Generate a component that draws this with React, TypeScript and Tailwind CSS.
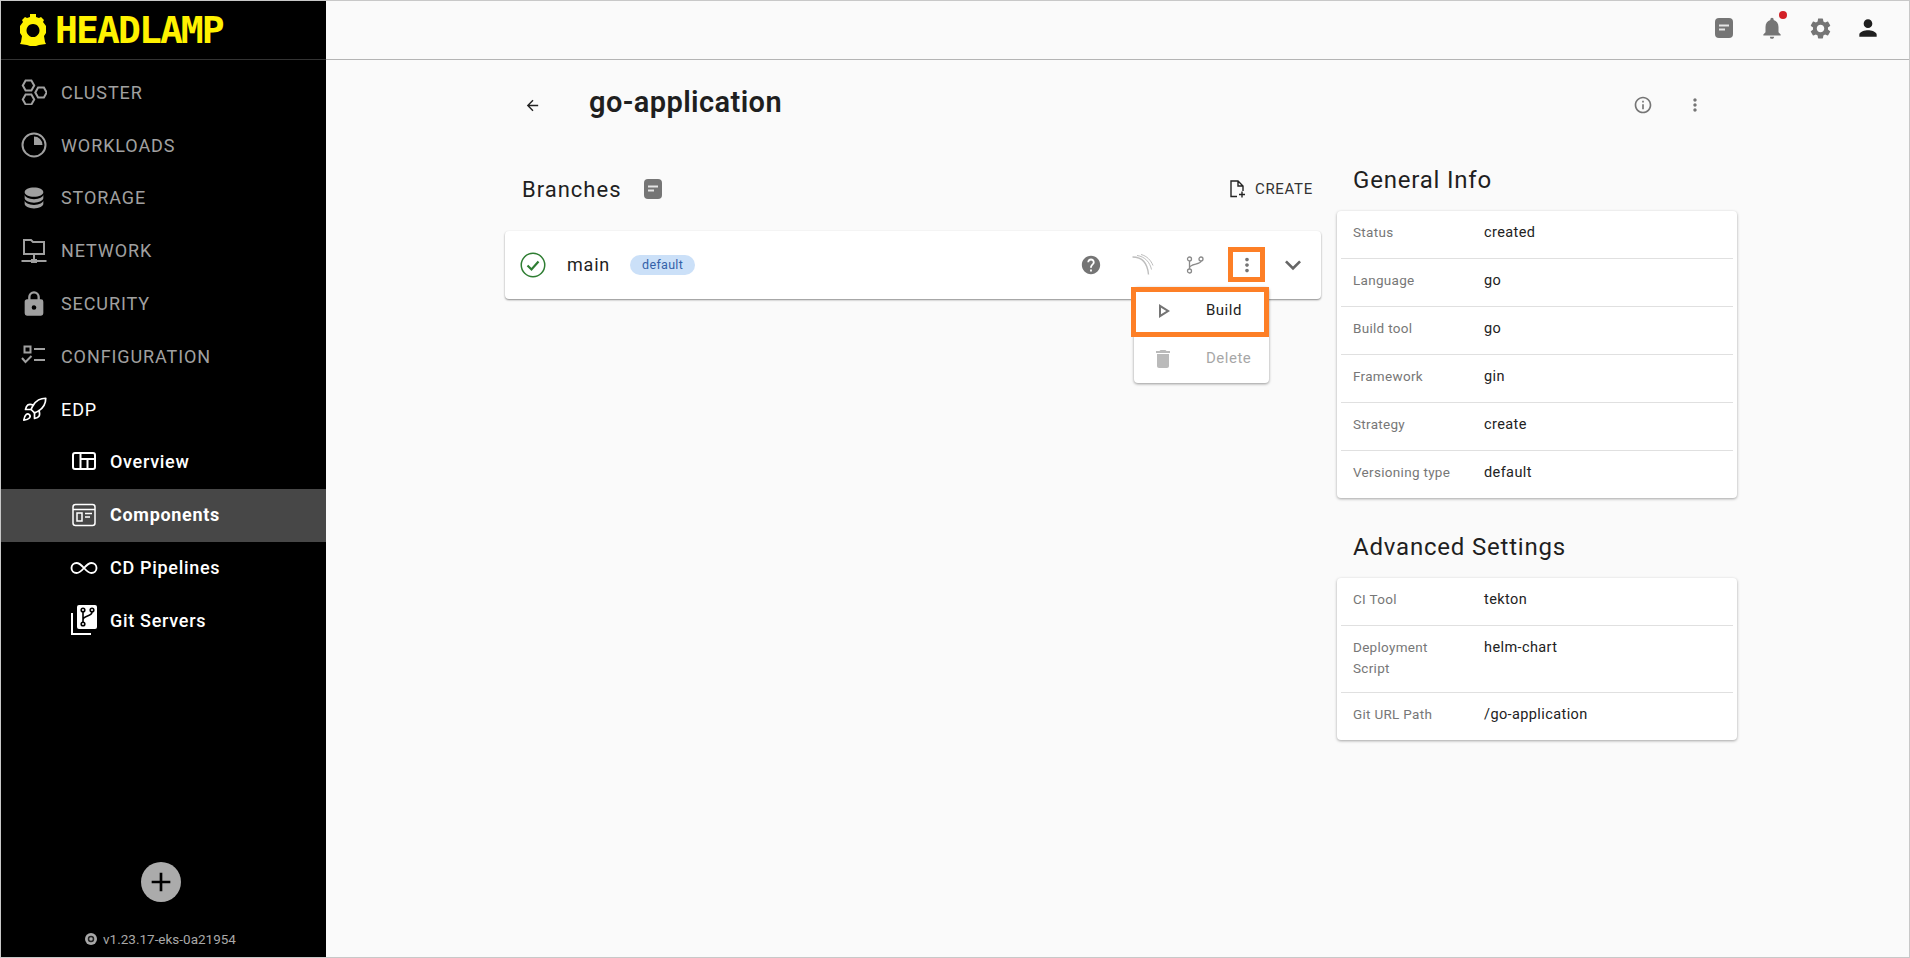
import type { ReactNode } from "react"
import { Infinity as InfinityIcon, Rocket } from "lucide-react"
import {
  MdAdd,
  MdArrowBack,
  MdDelete,
  MdExpandMore,
  MdHelp,
  MdInfoOutline,
  MdMoreVert,
  MdNotifications,
  MdOutlinePlayArrow,
  MdPerson,
  MdSettings,
} from "react-icons/md"

function NoteBadge({ className }: { className: string }) {
  return (
    <svg viewBox="0 0 18 20" className={className}>
      <rect width="18" height="20" rx="4" fill="#757575" />
      <path d="M4 7.500h10M4 11.500h6" stroke="#e4e4e4" strokeWidth="2" />
    </svg>
  )
}

function HeadlampGear() {
  return (
    <svg viewBox="0 0 26 32" className="h-[32px] w-[26px]">
      <path
        fillRule="evenodd"
        fill="#fff200"
        d="M10 0h6v3l3 1 2-1 3 3-1 2 3 4v7l-2 3 1 6 1 2-7 1-3 1h-6l-3-1-7-1 1-2 1-6-2-3v-7l3-4-1-2 3-3 2 1 3-1zM13 10a6.500 6.500 0 1 0 .01 0z"
      />
    </svg>
  )
}

function ClusterIcon() {
  const hex = "M-3.400-5.800h6.800L6.700 0 3.400 5.800h-6.800L-6.700 0z"
  return (
    <svg viewBox="0 0 26 26" className="h-[26px] w-[26px]" fill="none" stroke="currentColor" strokeWidth="2.400">
      <path d={hex} transform="translate(7.500 6.500) scale(0.85)" />
      <path d={hex} transform="translate(7.500 20.500) scale(0.85)" />
      <path d={hex} transform="translate(20 13.500) scale(0.85)" />
    </svg>
  )
}

function WorkloadsIcon() {
  return (
    <svg viewBox="0 0 26 26" className="h-[26px] w-[26px]" fill="none" stroke="currentColor">
      <circle cx="13" cy="13" r="11.500" strokeWidth="2" />
      <path d="M13 4.500a8.500 8.500 0 0 1 8.500 8.500H13z" fill="currentColor" stroke="none" />
    </svg>
  )
}

function StorageIcon() {
  return (
    <svg viewBox="0 0 24 24" className="h-[28px] w-[28px]" fill="currentColor">
      <path d="M12,3C7.58,3 4,4.79 4,7C4,9.21 7.58,11 12,11C16.42,11 20,9.21 20,7C20,4.79 16.42,3 12,3M4,9V12C4,14.21 7.58,16 12,16C16.42,16 20,14.21 20,12V9C20,11.21 16.42,13 12,13C7.58,13 4,11.21 4,9M4,14V17C4,19.21 7.58,21 12,21C16.42,21 20,19.21 20,17V14C20,16.21 16.42,18 12,18C7.58,18 4,16.21 4,14Z" />
    </svg>
  )
}

function NetworkIcon() {
  return (
    <svg viewBox="0 0 26 26" className="h-[26px] w-[26px]" fill="none" stroke="currentColor" strokeWidth="2">
      <path d="M3 16V2h7l2 2h11v12H3z" />
      <path d="M13 16v6M0.500 23h25" />
      <rect x="10" y="21" width="6" height="4" fill="currentColor" stroke="none" />
    </svg>
  )
}

function LockIcon() {
  return (
    <svg viewBox="0 0 24 24" className="h-[28px] w-[28px]" fill="currentColor">
      <path d="M12,17A2,2 0 0,0 14,15C14,13.89 13.1,13 12,13A2,2 0 0,0 10,15A2,2 0 0,0 12,17M18,8A2,2 0 0,1 20,10V20A2,2 0 0,1 18,22H6A2,2 0 0,1 4,20V10C4,8.89 4.9,8 6,8H7V6A5,5 0 0,1 12,1A5,5 0 0,1 17,6V8H18M12,3A3,3 0 0,0 9,6V8H15V6A3,3 0 0,0 12,3Z" />
    </svg>
  )
}

function ConfigIcon() {
  return (
    <svg viewBox="0 0 26 26" className="h-[26px] w-[26px]" fill="none" stroke="currentColor" strokeWidth="2">
      <rect x="3.500" y="3.500" width="6" height="6" />
      <path d="M13 6h11M13 17h11M1 15l3.500 4 6-6" />
    </svg>
  )
}

function OverviewIcon() {
  return (
    <svg viewBox="0 0 24 20" className="h-[20px] w-[24px]" fill="none" stroke="currentColor" strokeWidth="2">
      <rect x="1" y="1" width="22" height="16" rx="2" />
      <path d="M8.500 1v16M8.500 7H23M15.500 7v10" />
    </svg>
  )
}

function ComponentsIcon() {
  return (
    <svg viewBox="0 0 24 24" className="h-[24px] w-[24px]" fill="none" stroke="currentColor" strokeWidth="1.500">
      <rect x="1" y="1.500" width="22" height="21" rx="2.500" />
      <path d="M1 6.500h22M5 10h5v8H5zM13 10.500h7M13 14h5" />
    </svg>
  )
}

function GitServersIcon() {
  return (
    <svg viewBox="0 0 26 30" className="h-[30px] w-[26px]">
      <rect x="6" y="0" width="20" height="24" rx="2" fill="#fff" />
      <path d="M1 8v21h19" fill="none" stroke="#fff" strokeWidth="2" />
      <g fill="none" stroke="#000" strokeWidth="1.600">
        <circle cx="12" cy="5" r="1.800" />
        <circle cx="12" cy="19" r="1.800" />
        <circle cx="21" cy="5" r="1.800" />
        <path d="M12 7v10M21 7c0 5-9 3-9 8" />
      </g>
    </svg>
  )
}

function KubeIcon() {
  return (
    <svg viewBox="0 0 12 12" className="h-[12px] w-[12px]">
      <circle cx="6" cy="6" r="6" fill="#a8a8a8" />
      <circle cx="6" cy="6" r="2.500" fill="none" stroke="#222" strokeWidth="1.500" />
    </svg>
  )
}

function StatusIcon() {
  return (
    <svg viewBox="0 0 26 26" className="h-[26px] w-[26px]" fill="none" stroke="#2e7d32">
      <circle cx="13" cy="13" r="11.750" strokeWidth="1.500" />
      <path d="M7.500 13.500l4 4 7-8" strokeWidth="2.200" />
    </svg>
  )
}

function ArcsIcon() {
  return (
    <svg viewBox="0 0 22 22" className="h-[22px] w-[22px]" fill="none" stroke="#bdbdbd" strokeWidth="1">
      <path d="M0.500 3c9 0 15 6 16 17.500" strokeWidth="1.400" />
      <path d="M5 1.500c8 1 13 7 14.500 14" />
      <path d="M9 0.500c6 1.500 10 6 12 11" />
    </svg>
  )
}

function BranchIcon() {
  return (
    <svg viewBox="0 0 18 18" className="h-[18px] w-[18px]" fill="none" stroke="#8a8a8a" strokeWidth="1.300">
      <circle cx="3.500" cy="3" r="2" />
      <circle cx="3.500" cy="15" r="2" />
      <circle cx="15" cy="3" r="2" />
      <path d="M3.500 5v8M15 5c0 4-11.500 2-11.500 7" />
    </svg>
  )
}

function FileAddIcon() {
  return (
    <svg viewBox="0 0 16 18" className="h-[18px] w-[16px]" fill="none" stroke="#222" strokeWidth="1.400">
      <path d="M7 16.500H1V1h7l5 5v5M8 1v5h5M12 11.500v6M9 14.500h6" />
    </svg>
  )
}

const navItems: { label: string; icon: ReactNode }[] = [
  { label: "CLUSTER", icon: <ClusterIcon /> },
  { label: "WORKLOADS", icon: <WorkloadsIcon /> },
  { label: "STORAGE", icon: <StorageIcon /> },
  { label: "NETWORK", icon: <NetworkIcon /> },
  { label: "SECURITY", icon: <LockIcon /> },
  { label: "CONFIGURATION", icon: <ConfigIcon /> },
]

const subItems: { label: string; icon: ReactNode; active?: boolean }[] = [
  { label: "Overview", icon: <OverviewIcon /> },
  { label: "Components", icon: <ComponentsIcon />, active: true },
  { label: "CD Pipelines", icon: <InfinityIcon size={30} strokeWidth={1.5} /> },
  { label: "Git Servers", icon: <GitServersIcon /> },
]

const generalInfo = [
  ["Status", "created"],
  ["Language", "go"],
  ["Build tool", "go"],
  ["Framework", "gin"],
  ["Strategy", "create"],
  ["Versioning type", "default"],
]

const advancedSettings = [
  ["CI Tool", "tekton"],
  ["Deployment Script", "helm-chart"],
  ["Git URL Path", "/go-application"],
]

function Sidebar() {
  return (
    <aside className="flex w-[325px] shrink-0 flex-col bg-black">
      <div className="flex h-[59px] items-center gap-[9px] border-b border-[#333] pl-[19px]">
        <HeadlampGear />
        <span className="font-['DejaVu_Sans_Mono'] text-[38px] leading-none font-bold tracking-[-1.900px] text-[#fff200]">
          HEADLAMP
        </span>
      </div>
      <nav className="pt-[7px]">
        {navItems.map((item) => (
          <div key={item.label} className="flex h-[52.800px] items-center pb-[2px] text-[#a0a0a0]">
            <span className="flex w-[60px] justify-center pl-[6px]">{item.icon}</span>
            <span className="text-[18px] tracking-[0.900px]">{item.label}</span>
          </div>
        ))}
        <div className="flex h-[52.800px] items-center pb-[2px] text-white">
          <span className="flex w-[60px] justify-center pl-[6px]">
            <Rocket size={27} strokeWidth={1.5} />
          </span>
          <span className="text-[18px] tracking-[0.900px]">EDP</span>
        </div>
        {subItems.map((item) => (
          <div
            key={item.label}
            className={`flex h-[52.800px] items-center pb-[2px] text-white ${item.active ? "bg-[#474747]" : ""}`}
          >
            <span className="flex w-[109px] justify-center pl-[56px]">{item.icon}</span>
            <span className={`text-[18px] tracking-[0.700px] ${item.active ? "font-bold" : "font-medium"}`}>
              {item.label}
            </span>
          </div>
        ))}
      </nav>
      <div className="mt-auto flex flex-col items-center pb-[8px]">
        <div className="mr-[5px] mb-[27px] flex h-[40px] w-[40px] items-center justify-center rounded-full bg-[#ababab] text-black">
          <MdAdd size={32} />
        </div>
        <div className="mr-[6px] flex h-[20px] items-center gap-[6px] text-[13.500px] text-[#a8a8a8]">
          <KubeIcon />
          <span>v1.23.17-eks-0a21954</span>
        </div>
      </div>
    </aside>
  )
}

function TopBar() {
  return (
    <header className="flex h-[59px] shrink-0 items-center justify-end border-b border-[#b4b4b4] pr-[17px]">
      <div className="flex h-[48px] w-[48px] items-center justify-center pb-[4px]">
        <NoteBadge className="h-[20px] w-[18px]" />
      </div>
      <div className="relative flex h-[48px] w-[48px] items-center justify-center pb-[4px] text-[#757575]">
        <MdNotifications size={26} />
        <span className="absolute top-[5px] right-[9px] h-[8px] w-[8px] rounded-full bg-[#d32027]" />
      </div>
      <div className="flex h-[48px] w-[48px] items-center justify-center pb-[4px] text-[#757575]">
        <MdSettings size={25} />
      </div>
      <div className="flex h-[48px] w-[48px] items-center justify-center pb-[4px] text-[#1f1f1f]">
        <MdPerson size={26} />
      </div>
    </header>
  )
}

function InfoCard({ rows }: { rows: string[][] }) {
  return (
    <div className="rounded-[4px] bg-white px-[4px] shadow-[0_1px_3px_rgba(0,0,0,0.35)]">
      {rows.map(([label, value], i) => (
        <div
          key={label}
          className={`flex px-[12px] pt-[11px] pb-[13px] ${i < rows.length - 1 ? "min-h-[48px] border-b border-[#e0e0e0]" : "min-h-[47px]"}`}
        >
          <div className="w-[131px] pr-[30px] text-[13.500px] leading-[21px] tracking-[0.300px] text-[#777]">
            {label}
          </div>
          <div className="text-[14.500px] leading-[21px] tracking-[0.400px] text-[#222]">{value}</div>
        </div>
      ))}
    </div>
  )
}

function BranchCard() {
  return (
    <div className="relative flex h-[68px] items-center rounded-[4px] bg-white pr-[16px] pl-[15px] shadow-[0_1px_2px_rgba(0,0,0,0.45)]">
      <StatusIcon />
      <span className="ml-[21px] pb-[2px] text-[18px] tracking-[0.800px] text-[#1f1f1f]">main</span>
      <span className="ml-[20px] flex h-[20px] w-[65px] items-center justify-center rounded-full bg-[#cbe0f8] text-[12.500px] tracking-[0.300px] text-[#3461a8]">
        default
      </span>
      <div className="ml-auto flex items-center">
        <div className="flex w-[52px] justify-center text-[#757575]">
          <MdHelp size={22} />
        </div>
        <div className="flex w-[52px] justify-center">
          <ArcsIcon />
        </div>
        <div className="flex w-[52px] justify-center">
          <BranchIcon />
        </div>
        <div className="relative flex w-[52px] justify-center text-[#757575]">
          <MdMoreVert size={22} />
          <span className="absolute top-[-7px] left-[7px] h-[35px] w-[37px] border-[5px] border-[#fd7f26]" />
        </div>
        <div className="ml-[8px] text-[#666]">
          <MdExpandMore size={32} className="-mx-[4px]" />
        </div>
      </div>

      <div className="absolute top-[56px] left-[629px] z-10 w-[135px] rounded-[4px] bg-white shadow-[0_1px_3px_rgba(0,0,0,0.4)]">
        <div className="relative flex h-[48px] items-center">
          <span className="flex w-[72px] justify-center pr-[15px] text-[#757575]">
            <MdOutlinePlayArrow size={24} />
          </span>
          <span className="pb-[2px] text-[15px] tracking-[0.500px] text-[#222]">Build</span>
          <span className="absolute top-0 left-[-3px] h-[50px] w-[138px] border-[5px] border-[#fd7f26]" />
        </div>
        <div className="flex h-[48px] items-center opacity-40">
          <span className="flex w-[72px] justify-center pr-[15px] text-[#555]">
            <MdDelete size={24} />
          </span>
          <span className="pb-[2px] text-[15px] tracking-[0.500px] text-[#222]">Delete</span>
        </div>
      </div>
    </div>
  )
}

export default function App() {
  return (
    <div className="flex h-[958px] w-[1910px] overflow-hidden border border-[#c8c8c8] bg-[#fafafa] font-['Roboto',sans-serif]">
      <Sidebar />
      <div className="flex min-w-0 flex-1 flex-col">
        <TopBar />
        <main className="pl-[179px]">
          <div className="mt-[21px] flex h-[48px] w-[1216px] items-center">
            <span className="flex w-[54px] justify-center text-[#222]">
              <MdArrowBack size={17} />
            </span>
            <h1 className="ml-[30px] pb-[4px] text-[29px] font-semibold tracking-[0.400px] text-[#1f1f1f]">
              go-application
            </h1>
            <span className="ml-auto flex w-[52px] justify-center text-[#757575]">
              <MdInfoOutline size={20} />
            </span>
            <span className="flex w-[52px] justify-center text-[#757575]">
              <MdMoreVert size={20} />
            </span>
          </div>
          <div className="flex gap-[16px]">
            <section className="w-[816px] pt-[38px]">
              <div className="mb-[20px] flex h-[44px] items-center pl-[17px]">
                <h2 className="text-[22px] tracking-[1px] text-[#1f1f1f]">Branches</h2>
                <NoteBadge className="ml-[22px] h-[20px] w-[18px]" />
                <div className="ml-auto flex items-center gap-[9px] pr-[8px]">
                  <FileAddIcon />
                  <span className="text-[15px] tracking-[0.700px] text-[#333]">CREATE</span>
                </div>
              </div>
              <BranchCard />
            </section>
            <section className="w-[400px] pt-[33px]">
              <h2 className="mb-[13px] h-[36px] pl-[16px] text-[24px] leading-[36px] tracking-[0.800px] text-[#1f1f1f]">
                General Info
              </h2>
              <InfoCard rows={generalInfo} />
              <h2 className="mt-[31px] mb-[13px] h-[36px] pl-[16px] text-[24px] leading-[36px] tracking-[0.800px] text-[#1f1f1f]">
                Advanced Settings
              </h2>
              <InfoCard rows={advancedSettings} />
            </section>
          </div>
        </main>
      </div>
    </div>
  )
}
